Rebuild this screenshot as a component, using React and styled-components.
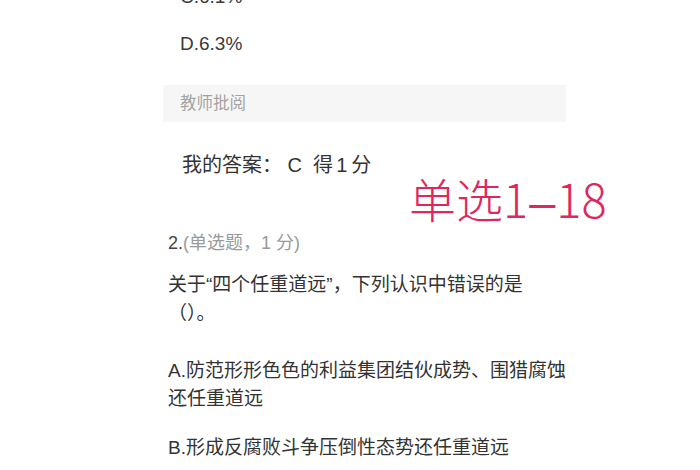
import React from "react";
import styled, { createGlobalStyle } from "styled-components";

const GlobalStyle = createGlobalStyle`
  html, body {
    margin: 0;
    padding: 0;
    background: #fff;
    overflow: hidden;
  }
  body {
    font-family: "Liberation Sans", "Noto Sans CJK SC", sans-serif;
    color: #333;
  }
`;

const options = ["C.6.1%", "D.6.3%"];

const App = () => {
  return (
    <Page>
      <GlobalStyle />
      <Column>
        <OptionList>
          {options.map((o) => (
            <Option key={o}>{o}</Option>
          ))}
        </OptionList>

        <ReviewBar>教师批阅</ReviewBar>

        <Answer>
          我的答案：&nbsp;C&nbsp;&nbsp;得<Score>1</Score>分
        </Answer>

        <QuestionHead>
          2.<Meta>(单选题，1 分)</Meta>
        </QuestionHead>
        <QuestionText>
          关于“四个任重道远”，下列认识中错误的是
          <br />
          （）。
        </QuestionText>

        <Choice $gap="21px">
          A.防范形形色色的利益集团结伙成势、围猎腐蚀
          <br />
          还任重道远
        </Choice>
        <Choice>B.形成反腐败斗争压倒性态势还任重道远</Choice>

        <Stamp>
          单选1<Dash>–</Dash>18
        </Stamp>
      </Column>
    </Page>
  );
};

const Page = styled.div`
  width: 700px;
  height: 470px;
  overflow: hidden;
`;

const Column = styled.div`
  position: relative;
  width: 403px;
  margin-left: 163px;
  margin-top: -17px;
  display: flex;
  flex-direction: column;
`;

const OptionList = styled.div`
  display: flex;
  flex-direction: column;
  gap: 19px;
  padding-left: 17px;
`;

const Option = styled.div`
  font-size: 19px;
  line-height: 28px;
  color: #3a3a3a;
`;

const ReviewBar = styled.div`
  margin-top: 27px;
  height: 37px;
  line-height: 37px;
  padding-left: 17px;
  background: #f6f6f6;
  color: #a3a3a3;
  font-size: 16.5px;
`;

const Answer = styled.div`
  margin-top: 29px;
  padding-left: 19px;
  font-size: 20px;
  line-height: 28px;
  color: #333;
`;

const Score = styled.span`
  margin: 0 4px 0 3px;
`;

const QuestionHead = styled.div`
  margin-top: 50px;
  padding-left: 5px;
  font-size: 18px;
  line-height: 28px;
  color: #444;
`;

const Meta = styled.span`
  color: #9a9a9a;
`;

const QuestionText = styled.div`
  margin-top: 13px;
  padding-left: 5px;
  font-size: 19px;
  line-height: 29px;
  color: #333;
`;

const Choice = styled.div`
  margin-top: 29px;
  margin-bottom: ${(p) => p.$gap || "0"};
  padding-left: 5px;
  font-size: 19px;
  line-height: 28px;
  color: #333;

  & + & {
    margin-top: 0;
  }
`;

const Stamp = styled.div`
  position: absolute;
  left: 246px;
  top: 187px;
  font-family: "Noto Sans CJK SC", sans-serif;
  font-size: 47px;
  font-weight: 300;
  line-height: 56px;
  color: #e0265c;
  white-space: nowrap;
`;

const Dash = styled.span`
  font-family: "Liberation Sans", sans-serif;
  font-weight: 400;
  margin: 0 1px;
`;

export default App;
